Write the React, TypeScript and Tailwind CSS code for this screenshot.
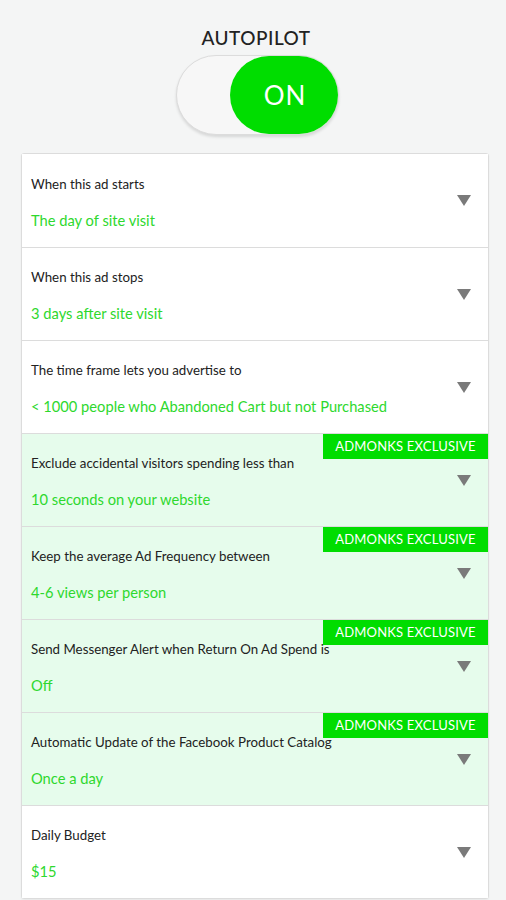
import React from 'react';

type Row = { label: string; value: string; exclusive?: boolean };

const ROWS: Row[] = [
  { label: 'When this ad starts', value: 'The day of site visit' },
  { label: 'When this ad stops', value: '3 days after site visit' },
  { label: 'The time frame lets you advertise to', value: '< 1000 people who Abandoned Cart but not Purchased' },
  { label: 'Exclude accidental visitors spending less than', value: '10 seconds on your website', exclusive: true },
  { label: 'Keep the average Ad Frequency between', value: '4-6 views per person', exclusive: true },
  { label: 'Send Messenger Alert when Return On Ad Spend is', value: 'Off', exclusive: true },
  { label: 'Automatic Update of the Facebook Product Catalog', value: 'Once a day', exclusive: true },
  { label: 'Daily Budget', value: '$15' },
];

const Caret = () => (
  <svg width="14" height="11" viewBox="0 0 14 11" className="shrink-0">
    <path d="M0 0 L14 0 L7 11 Z" fill="#7a7a7a" />
  </svg>
);

export default function App() {
  return (
    <div className="min-h-[900px] bg-[#f4f5f5] font-['Lato',sans-serif] pt-[27px]">
      {/* Autopilot toggle */}
      <div className="flex flex-col items-center">
        <h2 className="text-[19px] leading-[22px] font-medium tracking-[0.5px] text-[#222] ml-[6px]">AUTOPILOT</h2>
        <div className="mt-[6px] ml-[8px] w-[163px] h-[80px] rounded-full bg-[#f7f7f7] border border-[#dcdcdc] shadow-[0_2px_3px_rgba(0,0,0,0.12)] flex justify-end">
          <div className="w-[108px] h-[78px] rounded-full bg-[#00dd00] flex items-center justify-center">
            <span className="text-white text-[26px] font-normal tracking-[1px] ml-[3px]">ON</span>
          </div>
        </div>
      </div>

      {/* Settings list */}
      <div className="mx-[21px] mt-[18px] w-[468px] bg-white border border-[#dcdcdc] rounded-[3px] shadow-[0_1px_2px_rgba(0,0,0,0.06)]">
        {ROWS.map((row, i) => (
          <div
            key={row.label}
            className={`relative h-[93px] flex items-center justify-between pl-[9px] pr-[17px] ${
              i > 0 ? 'border-t border-[#dcdcdc]' : ''
            } ${row.exclusive ? 'bg-[#e6fcec]' : 'bg-white'}`}
          >
            {row.exclusive && (
              <div className="absolute top-0 right-0 w-[165px] h-[25px] bg-[#00dd00] text-white text-[13px] tracking-[0.2px] flex items-center justify-center">
                ADMONKS EXCLUSIVE
              </div>
            )}
            <div className="flex flex-col gap-[19px] pt-[3px]">
              <span className="text-[13.3px] leading-[16px] text-[#222]">{row.label}</span>
              <span className="text-[14.7px] leading-[18px] text-[#2ed82e]">{row.value}</span>
            </div>
            <Caret />
          </div>
        ))}
      </div>
    </div>
  );
}
